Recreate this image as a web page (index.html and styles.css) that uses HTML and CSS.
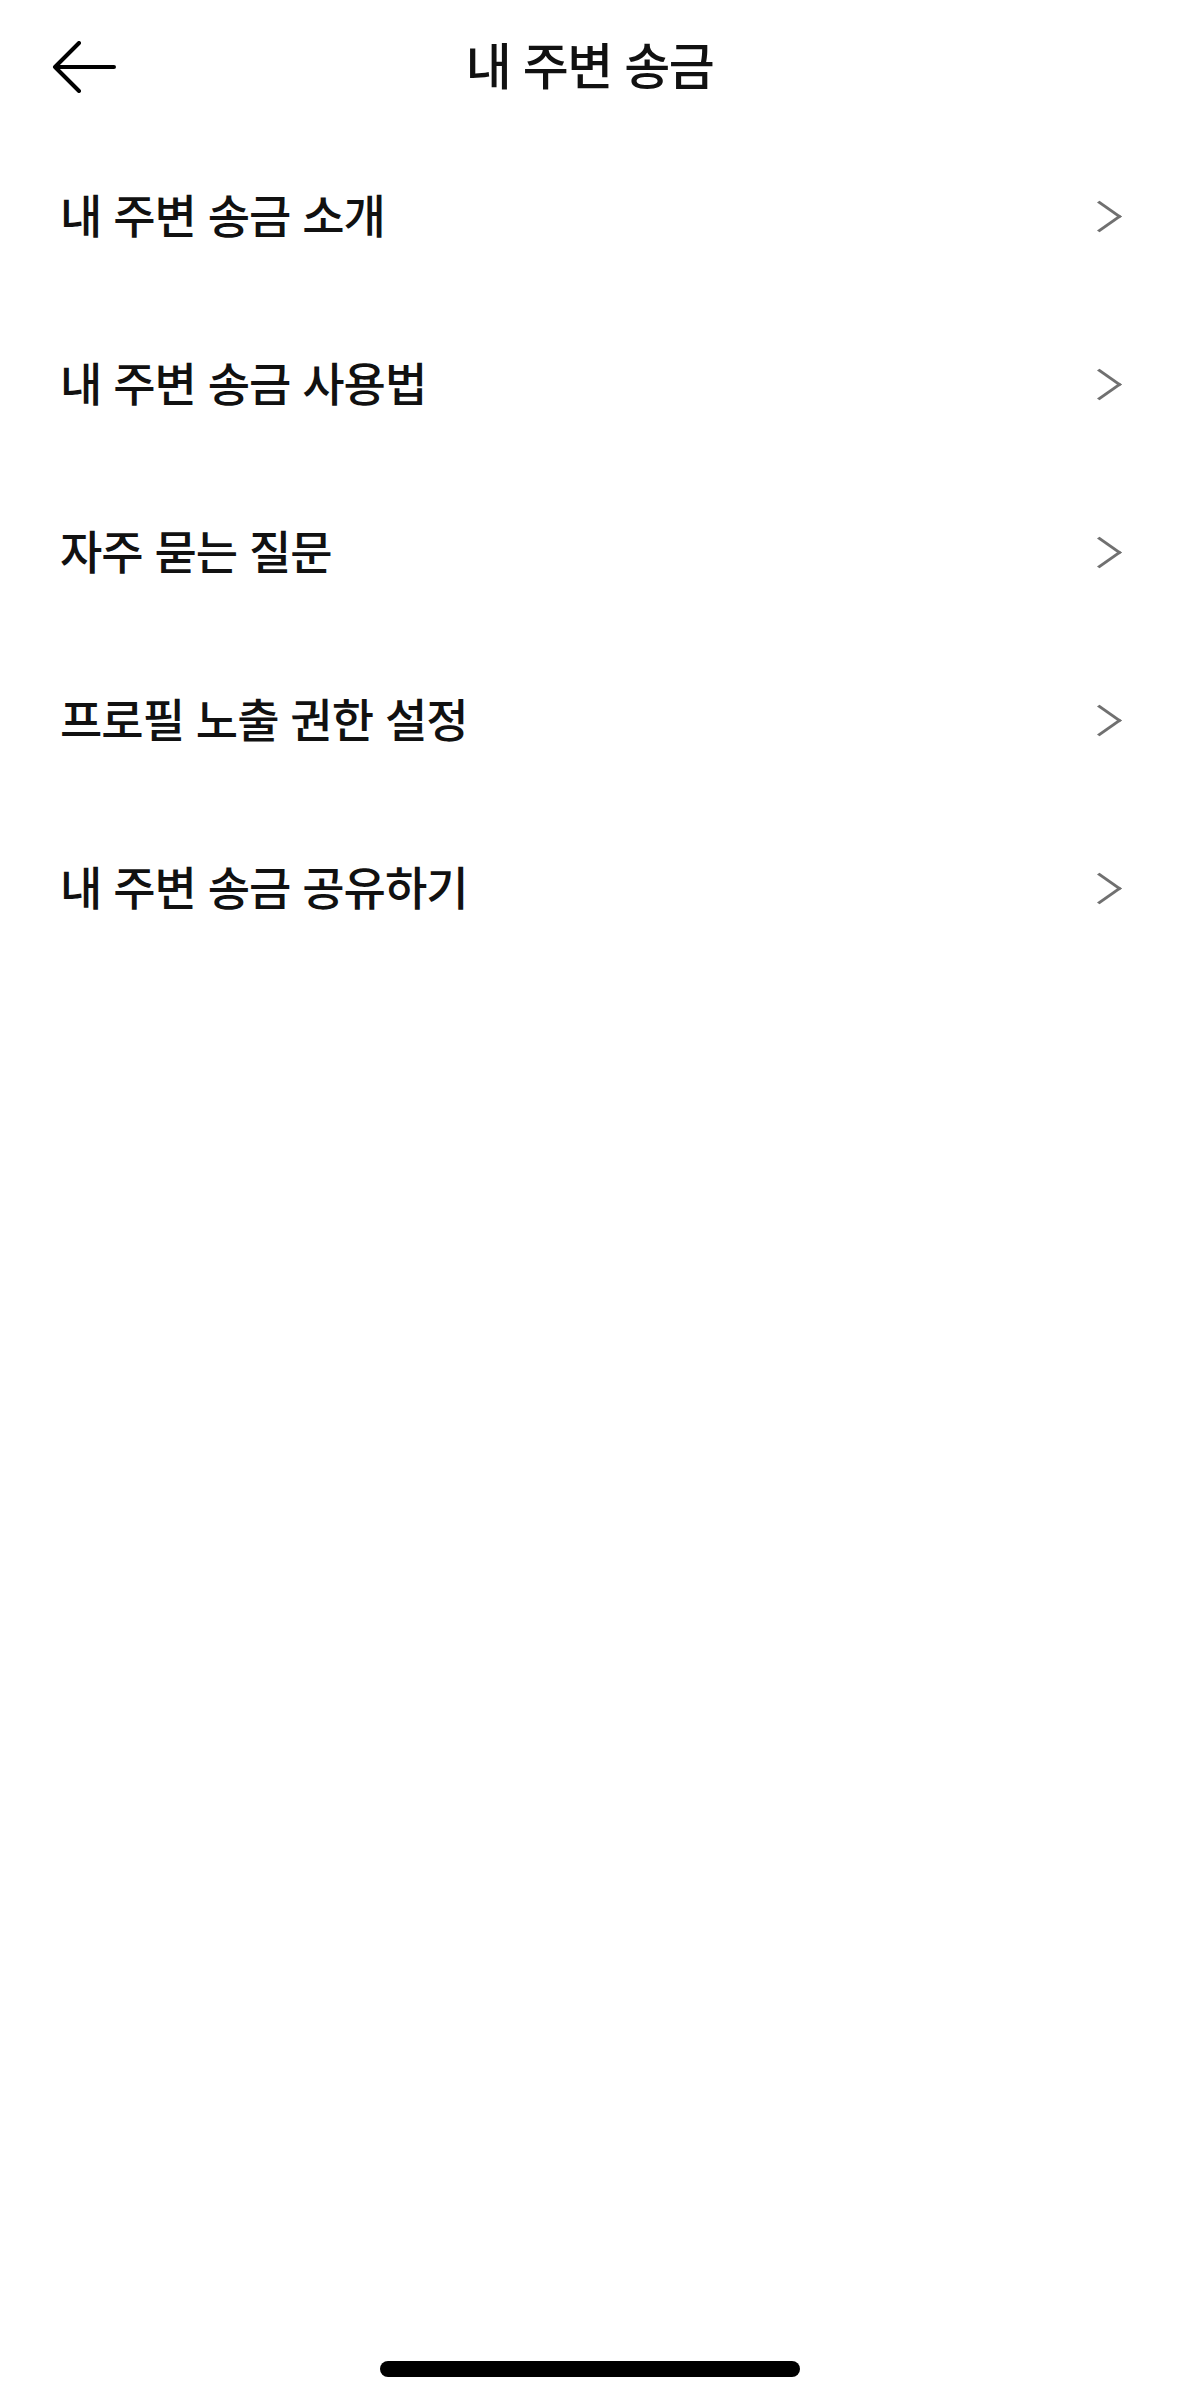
FILE: index.html
```html
<!DOCTYPE html>
<html lang="ko">
<head>
    <meta charset="UTF-8">
    <meta name="viewport" content="width=device-width, initial-scale=1.0">
    <title>내 주변 송금</title>
    <link rel="stylesheet" href="styles.css">
</head>
<body>
<div class="screen">

    <!-- Header -->
    <div class="top-bar">
        <button class="back-button" type="button" aria-label="뒤로">
            <svg width="64" height="52" viewBox="0 0 64 52">
                <path d="M27 2 L3 26 L27 50 M3 26 H62" fill="none" stroke="#000" stroke-width="4" stroke-linecap="round" stroke-linejoin="round"/>
            </svg>
        </button>
        <div class="top-title">내 주변 송금</div>
    </div>

    <!-- Menu -->
    <ul class="menu-list">
        <li class="menu-item"><span class="menu-label">내 주변 송금 소개</span><span class="chevron"></span></li>
        <li class="menu-item"><span class="menu-label">내 주변 송금 사용법</span><span class="chevron"></span></li>
        <li class="menu-item"><span class="menu-label">자주 묻는 질문</span><span class="chevron"></span></li>
        <li class="menu-item"><span class="menu-label">프로필 노출 권한 설정</span><span class="chevron"></span></li>
        <li class="menu-item"><span class="menu-label">내 주변 송금 공유하기</span><span class="chevron"></span></li>
    </ul>

    <div class="home-indicator"></div>
</div>
</body>
</html>
```

FILE: styles.css
```css
/* full-screen settings menu */
body {
    margin: 0;
    background: #fff;
    font-family: "Noto Sans CJK KR", "Noto Sans", sans-serif;
    color: #111;
}

.screen {
    min-height: 2396px;
    display: flex;
    flex-direction: column;
}

.top-bar {
    height: 132px;
    display: flex;
    align-items: center;
    justify-content: center;
    position: relative;
}

.back-button {
    position: absolute;
    left: 52px;
    top: 41px;
    padding: 0;
    border: none;
    background: none;
    display: flex;
}

.top-title {
    font-size: 50px;
    font-weight: 500;
    letter-spacing: -1.5px;
    padding-bottom: 6px;
}

.menu-list {
    list-style: none;
    margin: 0;
    padding: 0;
}

.menu-item {
    height: 168px;
    display: flex;
    align-items: center;
    justify-content: space-between;
    padding: 0 58px 0 60px;
}

.menu-label {
    font-size: 46px;
    font-weight: 500;
    letter-spacing: -1px;
    line-height: 1;
    padding-bottom: 6px;
}

.chevron {
    width: 24px;
    height: 24px;
    border-top: 3px solid #707070;
    border-right: 3px solid #707070;
    transform: rotate(45deg) skew(-10deg, -10deg);
    margin: 0 8px 0 0;
}

.home-indicator {
    margin: auto auto 19px;
    width: 420px;
    height: 16px;
    border-radius: 8px;
    background: #000;
}
```
